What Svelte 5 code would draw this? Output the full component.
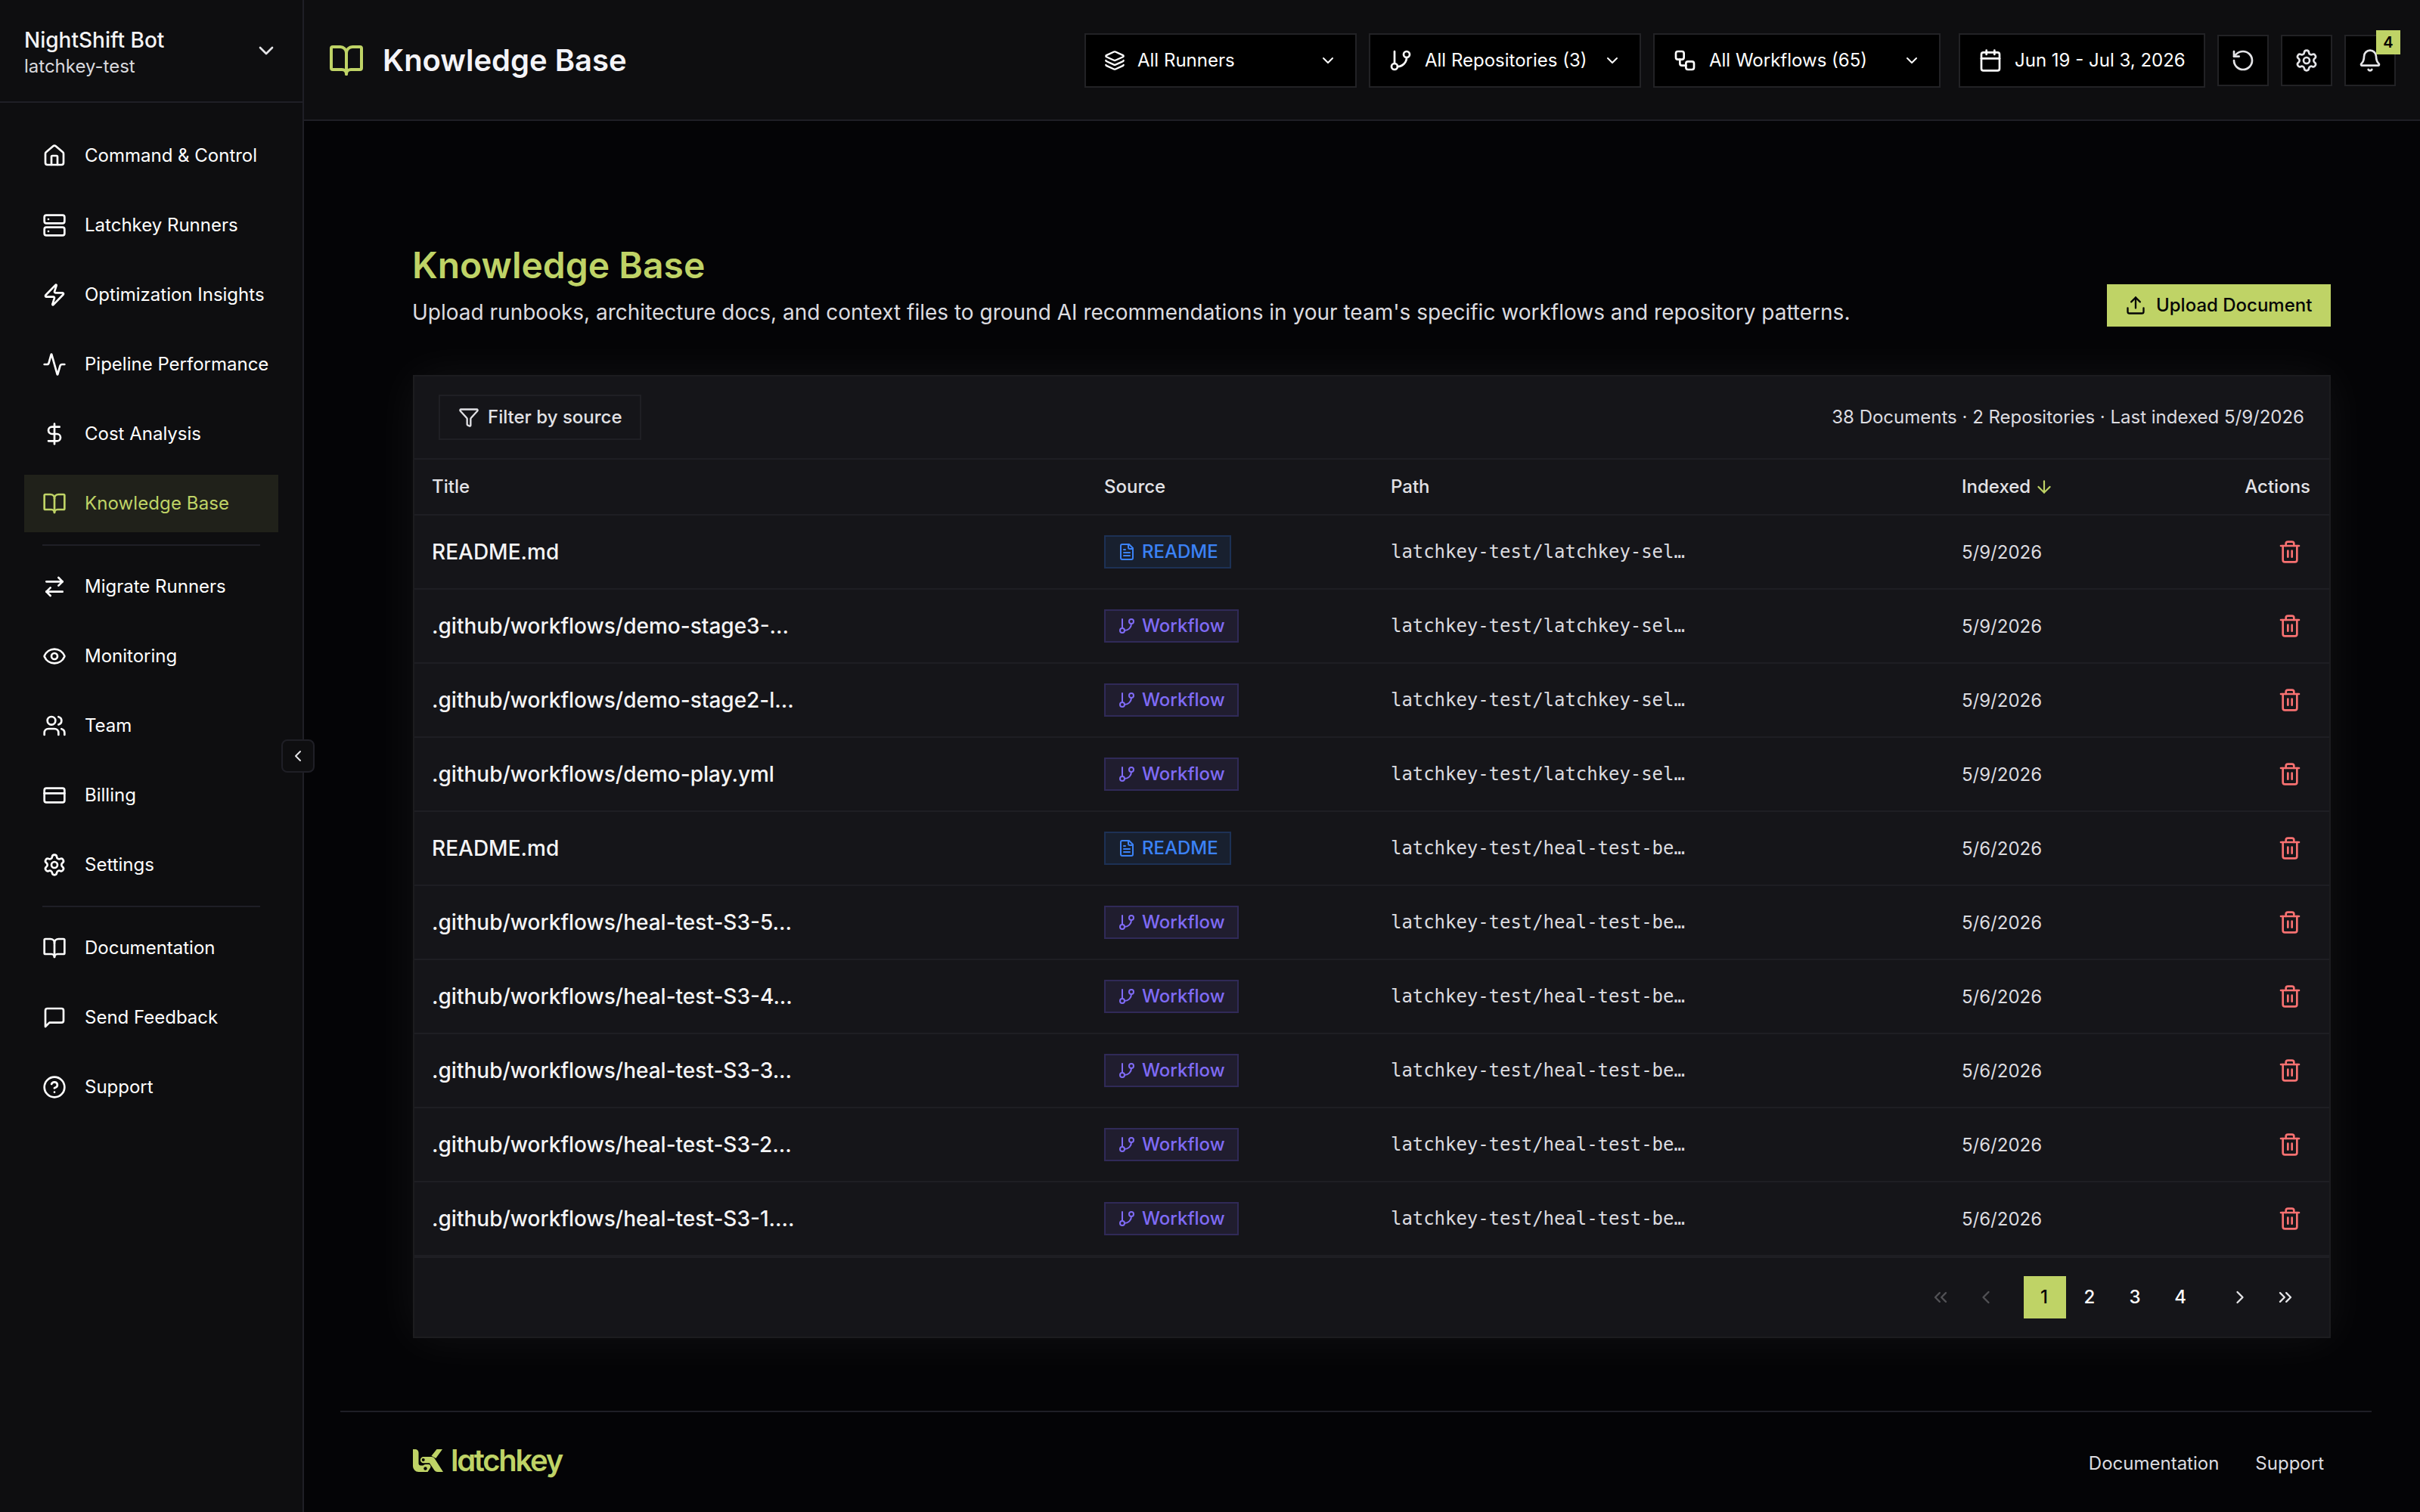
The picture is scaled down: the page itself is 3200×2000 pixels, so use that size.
<script>
  // Stroke icons on a 24x24 grid
  const icons = {
    home: '<path d="M15 21v-8a1 1 0 0 0-1-1h-4a1 1 0 0 0-1 1v8"/><path d="M3 10a2 2 0 0 1 .709-1.528l7-5.999a2 2 0 0 1 2.582 0l7 5.999A2 2 0 0 1 21 10v9a2 2 0 0 1-2 2H5a2 2 0 0 1-2-2z"/>',
    server: '<rect width="20" height="8" x="2" y="2" rx="2"/><rect width="20" height="8" x="2" y="14" rx="2"/><path d="M6 6h.01M6 18h.01"/>',
    zap: '<path d="M4 14a1 1 0 0 1-.78-1.63l9.9-10.2a.5.5 0 0 1 .86.46l-1.92 6.02A1 1 0 0 0 13 10h7a1 1 0 0 1 .78 1.63l-9.9 10.2a.5.5 0 0 1-.86-.46l1.92-6.02A1 1 0 0 0 11 14z"/>',
    activity: '<path d="M22 12h-2.48a2 2 0 0 0-1.93 1.46l-2.35 8.36a.25.25 0 0 1-.48 0L9.24 2.18a.25.25 0 0 0-.48 0l-2.35 8.36A2 2 0 0 1 4.49 12H2"/>',
    dollar: '<path d="M12 2v20"/><path d="M17 5H9.5a3.5 3.5 0 0 0 0 7h5a3.5 3.5 0 0 1 0 7H6"/>',
    book: '<path d="M12 7v14"/><path d="M3 18a1 1 0 0 1-1-1V4a1 1 0 0 1 1-1h5a4 4 0 0 1 4 4 4 4 0 0 1 4-4h5a1 1 0 0 1 1 1v13a1 1 0 0 1-1 1h-6a3 3 0 0 0-3 3 3 3 0 0 0-3-3z"/>',
    swap: '<path d="m16 3 4 4-4 4"/><path d="M20 7H4"/><path d="m8 21-4-4 4-4"/><path d="M4 17h16"/>',
    eye: '<path d="M2.062 12.348a1 1 0 0 1 0-.696 10.75 10.75 0 0 1 19.876 0 1 1 0 0 1 0 .696 10.75 10.75 0 0 1-19.876 0"/><circle cx="12" cy="12" r="3"/>',
    users: '<path d="M16 21v-2a4 4 0 0 0-4-4H6a4 4 0 0 0-4 4v2"/><circle cx="9" cy="7" r="4"/><path d="M22 21v-2a4 4 0 0 0-3-3.87"/><path d="M16 3.13a4 4 0 0 1 0 7.75"/>',
    card: '<rect width="20" height="14" x="2" y="5" rx="2"/><path d="M2 10h20"/>',
    gear: '<path d="M9.671 4.136a2.34 2.34 0 0 1 4.659 0 2.34 2.34 0 0 0 3.319 1.915 2.34 2.34 0 0 1 2.33 4.033 2.34 2.34 0 0 0 0 3.831 2.34 2.34 0 0 1-2.33 4.033 2.34 2.34 0 0 0-3.319 1.915 2.34 2.34 0 0 1-4.659 0 2.34 2.34 0 0 0-3.32-1.915 2.34 2.34 0 0 1-2.33-4.033 2.34 2.34 0 0 0 0-3.831A2.34 2.34 0 0 1 6.35 6.051a2.34 2.34 0 0 0 3.319-1.915"/><circle cx="12" cy="12" r="3"/>',
    message: '<path d="M21 15a2 2 0 0 1-2 2H7l-4 4V5a2 2 0 0 1 2-2h14a2 2 0 0 1 2 2z"/>',
    help: '<circle cx="12" cy="12" r="10"/><path d="M9.09 9a3 3 0 0 1 5.83 1c0 2-3 3-3 3"/><path d="M12 17h.01"/>',
    layers: '<path d="M12.83 2.18a2 2 0 0 0-1.66 0L2.6 6.08a1 1 0 0 0 0 1.83l8.58 3.91a2 2 0 0 0 1.66 0l8.58-3.9a1 1 0 0 0 0-1.83z"/><path d="M2 12a1 1 0 0 0 .58.91l8.6 3.91a2 2 0 0 0 1.65 0l8.58-3.9A1 1 0 0 0 22 12"/><path d="M2 17a1 1 0 0 0 .58.91l8.6 3.91a2 2 0 0 0 1.65 0l8.58-3.9A1 1 0 0 0 22 17"/>',
    branch: '<path d="M6 3v12"/><circle cx="18" cy="6" r="3"/><circle cx="6" cy="18" r="3"/><path d="M18 9a9 9 0 0 1-9 9"/>',
    workflow: '<rect width="8" height="8" x="3" y="3" rx="2"/><path d="M7 11v4a2 2 0 0 0 2 2h4"/><rect width="8" height="8" x="13" y="13" rx="2"/>',
    calendar: '<path d="M8 2v4M16 2v4"/><rect width="18" height="18" x="3" y="4" rx="2"/><path d="M3 10h18"/>',
    reset: '<path d="M3 12a9 9 0 1 0 9-9 9.75 9.75 0 0 0-6.74 2.74L3 8"/><path d="M3 3v5h5"/>',
    bell: '<path d="M10.268 21a2 2 0 0 0 3.464 0"/><path d="M3.262 15.326A1 1 0 0 0 4 17h16a1 1 0 0 0 .74-1.673C19.41 13.956 18 12.499 18 8A6 6 0 0 0 6 8c0 4.499-1.411 5.956-2.738 7.326"/>',
    upload: '<path d="M12 3v12"/><path d="m17 8-5-5-5 5"/><path d="M21 15v4a2 2 0 0 1-2 2H5a2 2 0 0 1-2-2v-4"/>',
    filter: '<path d="M10 20a1 1 0 0 0 .553.895l2 1A1 1 0 0 0 14 21v-7a2 2 0 0 1 .517-1.341L21.74 4.67A1 1 0 0 0 21 3H3a1 1 0 0 0-.742 1.67l7.225 7.989A2 2 0 0 1 10 14z"/>',
    file: '<path d="M15 2H6a2 2 0 0 0-2 2v16a2 2 0 0 0 2 2h12a2 2 0 0 0 2-2V7Z"/><path d="M14 2v4a2 2 0 0 0 2 2h4"/><path d="M10 9H8M16 13H8M16 17H8"/>',
    trash: '<path d="M10 11v6M14 11v6"/><path d="M19 6v14a2 2 0 0 1-2 2H7a2 2 0 0 1-2-2V6"/><path d="M3 6h18"/><path d="M8 6V4a2 2 0 0 1 2-2h4a2 2 0 0 1 2 2v2"/>',
    arrowDown: '<path d="M12 5v14"/><path d="m19 12-7 7-7-7"/>',
    down: '<path d="m6 9 6 6 6-6"/>',
    left: '<path d="m15 18-6-6 6-6"/>',
    right: '<path d="m9 18 6-6-6-6"/>',
    first: '<path d="m11 17-5-5 5-5"/><path d="m18 17-5-5 5-5"/>',
    last: '<path d="m6 17 5-5-5-5"/><path d="m13 17 5-5-5-5"/>'
  };

  // Sidebar groups, separated by a divider
  const navGroups = [
    [
      { label: 'Command & Control', icon: 'home' },
      { label: 'Latchkey Runners', icon: 'server' },
      { label: 'Optimization Insights', icon: 'zap' },
      { label: 'Pipeline Performance', icon: 'activity' },
      { label: 'Cost Analysis', icon: 'dollar' },
      { label: 'Knowledge Base', icon: 'book' }
    ],
    [
      { label: 'Migrate Runners', icon: 'swap' },
      { label: 'Monitoring', icon: 'eye' },
      { label: 'Team', icon: 'users' },
      { label: 'Billing', icon: 'card' },
      { label: 'Settings', icon: 'gear' }
    ],
    [
      { label: 'Documentation', icon: 'book' },
      { label: 'Send Feedback', icon: 'message' },
      { label: 'Support', icon: 'help' }
    ]
  ];

  const selfHealPath = 'latchkey-test/latchkey-sel…';
  const healTestPath = 'latchkey-test/heal-test-be…';

  const documents = [
    { title: 'README.md', source: 'README', path: selfHealPath, indexed: '5/9/2026' },
    { title: '.github/workflows/demo-stage3-...', source: 'Workflow', path: selfHealPath, indexed: '5/9/2026' },
    { title: '.github/workflows/demo-stage2-l...', source: 'Workflow', path: selfHealPath, indexed: '5/9/2026' },
    { title: '.github/workflows/demo-play.yml', source: 'Workflow', path: selfHealPath, indexed: '5/9/2026' },
    { title: 'README.md', source: 'README', path: healTestPath, indexed: '5/6/2026' },
    { title: '.github/workflows/heal-test-S3-5...', source: 'Workflow', path: healTestPath, indexed: '5/6/2026' },
    { title: '.github/workflows/heal-test-S3-4...', source: 'Workflow', path: healTestPath, indexed: '5/6/2026' },
    { title: '.github/workflows/heal-test-S3-3...', source: 'Workflow', path: healTestPath, indexed: '5/6/2026' },
    { title: '.github/workflows/heal-test-S3-2...', source: 'Workflow', path: healTestPath, indexed: '5/6/2026' },
    { title: '.github/workflows/heal-test-S3-1....', source: 'Workflow', path: healTestPath, indexed: '5/6/2026' }
  ];

  let active = $state('Knowledge Base');
  let page = $state(1);
</script>

{#snippet icon(name, size = 32)}
  <svg class="icon" width={size} height={size} viewBox="0 0 24 24">{@html icons[name]}</svg>
{/snippet}

<div class="app">
  <aside class="sidebar">
    <div class="account">
      <div class="account-text">
        <div class="account-name">NightShift Bot</div>
        <div class="account-org">latchkey-test</div>
      </div>
      {@render icon('down')}
    </div>

    <nav>
      {#each navGroups as group, i}
        {#if i > 0}
          <hr />
        {/if}
        {#each group as item}
          <button class="nav-item" class:active={item.label === active} onclick={() => (active = item.label)}>
            {@render icon(item.icon)}
            <span>{item.label}</span>
          </button>
        {/each}
      {/each}
    </nav>

    <button class="collapse" aria-label="Collapse sidebar">{@render icon('left', 24)}</button>
  </aside>

  <main>
    <header class="topbar">
      <div class="page-name">
        {@render icon('book', 48)}
        <span>Knowledge Base</span>
      </div>
      <div class="controls">
        <button class="select">
          {@render icon('layers', 28)}
          <span>All Runners</span>
          {@render icon('down', 24)}
        </button>
        <button class="select">
          {@render icon('branch')}
          <span>All Repositories (3)</span>
          {@render icon('down', 24)}
        </button>
        <button class="select wide">
          {@render icon('workflow')}
          <span>All Workflows (65)</span>
          {@render icon('down', 24)}
        </button>
        <button class="select date">
          {@render icon('calendar')}
          <span>Jun 19 - Jul 3, 2026</span>
        </button>
        <button class="icon-button" aria-label="Refresh">{@render icon('reset')}</button>
        <button class="icon-button" aria-label="Settings">{@render icon('gear')}</button>
        <button class="icon-button" aria-label="Notifications">
          {@render icon('bell')}
          <span class="count">4</span>
        </button>
      </div>
    </header>

    <section class="content">
      <div class="heading">
        <div class="heading-text">
          <h1>Knowledge Base</h1>
          <p>Upload runbooks, architecture docs, and context files to ground AI recommendations in your team's specific workflows and repository patterns.</p>
        </div>
        <button class="upload">
          {@render icon('upload', 28)}
          <span>Upload Document</span>
        </button>
      </div>

      <div class="card">
        <div class="toolbar">
          <button class="filter">
            {@render icon('filter', 28)}
            <span>Filter by source</span>
          </button>
          <span class="summary">38 Documents · 2 Repositories · Last indexed 5/9/2026</span>
        </div>

        <div class="row head">
          <span>Title</span>
          <span class="source">Source</span>
          <span>Path</span>
          <span class="sorted">Indexed {@render icon('arrowDown', 26)}</span>
          <span class="end">Actions</span>
        </div>
        {#each documents as doc}
          <div class="row">
            <span class="title">{doc.title}</span>
            <span class="source">
              <span class="tag" class:readme={doc.source === 'README'}>
                {@render icon(doc.source === 'README' ? 'file' : 'branch', 24)}
                {doc.source}
              </span>
            </span>
            <span class="path">{doc.path}</span>
            <span class="date-cell">{doc.indexed}</span>
            <span class="end">
              <button class="delete" aria-label="Delete">{@render icon('trash')}</button>
            </span>
          </div>
        {/each}

        <div class="pagination">
          <button class="page off" aria-label="First page">{@render icon('first', 28)}</button>
          <button class="page off" aria-label="Previous page">{@render icon('left', 28)}</button>
          <div class="pages">
            {#each [1, 2, 3, 4] as n}
              <button class="page number" class:current={n === page} onclick={() => (page = n)}>{n}</button>
            {/each}
          </div>
          <button class="page" aria-label="Next page">{@render icon('right', 28)}</button>
          <button class="page" aria-label="Last page">{@render icon('last', 28)}</button>
        </div>
      </div>
    </section>

    <footer>
      <div class="brand">
        <svg width="40" height="30" viewBox="0 0 40 30">
          <path class="fill" d="M0 0h3A4.500 4.500 0 0 1 7.500 4.500V18.500a3 3 0 0 0 3 3H13.500A4 4 0 0 1 17 20H20.500a3 3 0 0 1 2.600 4.500L19.500 30H7.500A7.500 7.500 0 0 1 0 22.500z" />
          <path class="fill" d="M31.500 0H39L30.300 12 24.500 8.800z" />
          <path class="fill" d="M14 10H24.500a5 5 0 0 1 4 2L40 30H32.500a5 5 0 0 1-4-2L22 18.300H14a4.150 4.150 0 0 1 0-8.300z" />
          <circle class="hole" cx="13.700" cy="14" r="2" />
          <circle class="hole" cx="16.500" cy="25.500" r="2.200" />
        </svg>
        <span>latchkey</span>
      </div>
      <div class="links">
        <span>Documentation</span>
        <span>Support</span>
      </div>
    </footer>
  </main>
</div>

<style>
  :global(body) {
    background: #040406;
  }

  .app {
    display: flex;
    width: 3200px;
    height: 2000px;
    overflow: hidden;
    background: #040406;
    color: #fff;
    font-family: Inter, sans-serif;
    font-size: 24px;
    line-height: 36px;
  }

  .app * {
    box-sizing: border-box;
  }

  button {
    margin: 0;
    padding: 0;
    border: 0;
    border-radius: 0;
    background: none;
    color: inherit;
    font: inherit;
    letter-spacing: inherit;
    cursor: pointer;
  }

  .icon {
    display: block;
    flex: none;
    fill: none;
    stroke: currentColor;
    stroke-width: 2;
    stroke-linecap: round;
    stroke-linejoin: round;
  }

  /* Sidebar */
  .sidebar {
    position: relative;
    flex: none;
    width: 402px;
    border-right: 2px solid #1f1f26;
    background: #0e0e10;
  }

  .account {
    display: flex;
    align-items: center;
    justify-content: space-between;
    height: 136px;
    padding: 0 32px;
    border-bottom: 2px solid #1f1f26;
  }

  .account-text {
    margin-top: 6px;
  }

  .account-name {
    color: #f4f4f5;
    font-size: 28px;
    font-weight: 500;
    line-height: 36px;
  }

  .account-org {
    color: #d9d9de;
    line-height: 34px;
  }

  .account .icon {
    color: #e4e4e7;
  }

  nav {
    display: flex;
    flex-direction: column;
    gap: 16px;
    padding: 32px;
  }

  hr {
    width: 288px;
    height: 2px;
    margin: 0 24px;
    border: 0;
    background: #1f1f26;
  }

  .nav-item {
    display: flex;
    align-items: center;
    gap: 24px;
    height: 76px;
    padding: 0 24px;
    white-space: nowrap;
  }

  .nav-item.active {
    background: #20211a;
    color: #bfd366;
    letter-spacing: 0.1px;
  }

  .collapse {
    position: absolute;
    top: 978px;
    left: 372px;
    z-index: 1;
    display: flex;
    align-items: center;
    justify-content: center;
    width: 44px;
    height: 44px;
    border: 2px solid #1f1f26;
    border-radius: 8px;
    background: #0e0e10;
    color: #e4e4e7;
  }

  /* Top bar */
  main {
    flex: 1;
    min-width: 0;
  }

  .topbar {
    display: flex;
    align-items: center;
    justify-content: space-between;
    height: 160px;
    padding: 2px 32px 0;
    border-bottom: 2px solid #1f1f26;
    background: #0e0e10;
  }

  .page-name {
    display: flex;
    align-items: center;
    gap: 24px;
    color: #f4f4f8;
    font-size: 40px;
    font-weight: 600;
    line-height: 56px;
  }

  .page-name .icon {
    color: #bfd366;
  }

  .controls {
    display: flex;
    align-items: center;
    gap: 16px;
  }

  .select {
    display: flex;
    align-items: center;
    gap: 16px;
    width: 360px;
    height: 72px;
    padding: 0 24px;
    border: 2px solid #222225;
    background: #000;
    white-space: nowrap;
  }

  .select .icon:last-child {
    margin-left: auto;
  }

  .select.wide {
    width: 380px;
  }

  .select.date {
    width: 326px;
    margin-left: 8px;
  }

  .icon-button {
    position: relative;
    display: flex;
    align-items: center;
    justify-content: center;
    width: 68px;
    height: 68px;
    border: 2px solid #222225;
    background: #000;
    color: #e4e4e7;
  }

  .count {
    position: absolute;
    top: -8px;
    right: -8px;
    width: 32px;
    height: 32px;
    background: #bfd366;
    color: #000;
    font-size: 20px;
    font-weight: 600;
    line-height: 32px;
    text-align: center;
  }

  /* Page content */
  .content {
    height: 1706px;
    padding: 158px 118px 0 144px;
  }

  .heading {
    display: flex;
    align-items: flex-end;
    justify-content: space-between;
    height: 114px;
    margin-bottom: 64px;
  }

  .heading-text {
    margin-left: -1px;
  }

  h1 {
    margin: 0 0 9px;
    color: #bfd366;
    font-size: 48px;
    font-weight: 600;
    line-height: 64px;
  }

  p {
    margin: 0 0 -2px;
    color: #dcdce0;
    font-size: 28px;
    line-height: 42px;
    white-space: nowrap;
  }

  .upload {
    display: flex;
    align-items: center;
    gap: 13px;
    width: 296px;
    height: 56px;
    padding: 0 0 0 24px;
    background: #bfd366;
    color: #050507;
    font-weight: 500;
    white-space: nowrap;
  }

  .card {
    border: 2px solid #1c1c1f;
    background: #151519;
    box-shadow: 0 0 60px rgba(255, 255, 255, 0.06);
  }

  .toolbar {
    display: flex;
    align-items: center;
    justify-content: space-between;
    height: 108px;
    padding: 0 33px 0 32px;
  }

  .filter {
    display: flex;
    align-items: center;
    gap: 11px;
    width: 268px;
    height: 60px;
    padding: 0 0 0 24px;
    border: 2px solid #1f1f24;
    color: #e2e2e6;
    font-weight: 500;
    white-space: nowrap;
  }

  .summary {
    color: #dcdce0;
  }

  .row {
    display: grid;
    grid-template-columns: 888px 380px 755px 1fr 120px;
    align-items: center;
    height: 98px;
    padding: 0 24px 0 23px;
    border-bottom: 2px solid #1e1e23;
  }

  .row.head {
    height: 76px;
    border-top: 2px solid #1e1e23;
    color: #e2e2e6;
    font-weight: 500;
  }

  .head .end {
    padding-right: 1px;
  }

  .source {
    padding-left: 1px;
  }

  .sorted {
    display: flex;
    align-items: center;
    gap: 5px;
  }

  .sorted .icon {
    color: #bfd366;
  }

  .end {
    display: flex;
    justify-content: flex-end;
  }

  .title {
    color: #f4f4f5;
    font-size: 28px;
    font-weight: 500;
  }

  .tag {
    display: inline-flex;
    align-items: center;
    gap: 8px;
    height: 44px;
    padding: 0 16px;
    border: 2px solid #302a58;
    background: #201d2f;
    color: #7f6bf5;
    font-weight: 500;
    vertical-align: middle;
  }

  .tag.readme {
    padding-right: 15px;
    border-color: #1d3155;
    background: #18202f;
    color: #3b82f6;
  }

  .path {
    color: #dcdce0;
    font-family: "DejaVu Sans Mono", monospace;
    font-size: 24px;
    letter-spacing: -0.05px;
  }

  .date-cell {
    padding-top: 2px;
    color: #dcdce0;
  }

  .delete {
    display: flex;
    align-items: center;
    justify-content: center;
    width: 56px;
    height: 56px;
    color: #f87171;
  }

  .pagination {
    display: flex;
    align-items: center;
    justify-content: flex-end;
    gap: 4px;
    height: 106px;
    padding-right: 30px;
    border-top: 2px solid #1e1e23;
  }

  .pages {
    display: flex;
    gap: 4px;
    margin: 0 18px;
  }

  .page {
    display: flex;
    align-items: center;
    justify-content: center;
    width: 56px;
    height: 56px;
    color: #e4e4e7;
    font-weight: 500;
  }

  .page.number {
    padding-right: 2px;
    color: #fff;
  }

  .page.number.current {
    background: #bfd366;
    color: #050507;
  }

  .page.off {
    color: #515155;
  }

  /* Footer */
  footer {
    display: flex;
    align-items: center;
    justify-content: space-between;
    height: 134px;
    margin: 0 64px 0 48px;
    padding: 0 63px 0 96px;
    border-top: 2px solid #1f1f26;
  }

  .brand {
    display: flex;
    align-items: center;
    gap: 10px;
    margin-bottom: 5px;
    color: #bfd366;
    font-size: 40px;
    font-weight: 600;
    font-feature-settings: "cv11";
    letter-spacing: -2.3px;
  }

  .fill {
    fill: #bfd366;
  }

  .hole {
    fill: #040406;
  }

  .links {
    display: flex;
    gap: 48px;
    margin-top: 4px;
    color: #dcdce0;
  }
</style>
